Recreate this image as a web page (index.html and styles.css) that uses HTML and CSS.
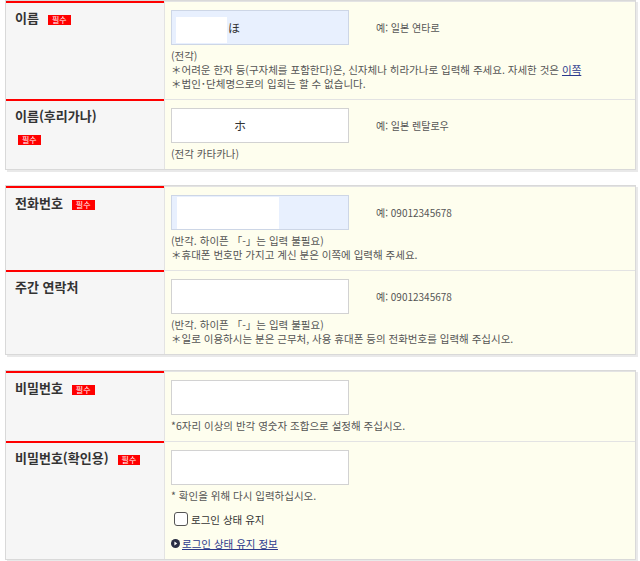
FILE: index.html
```html
<!DOCTYPE html>
<html lang="ko">
<head>
  <meta charset="UTF-8">
  <title>회원 정보 입력</title>
  <link rel="stylesheet" href="styles.css">
</head>
<body>

  <table class="form-table">
    <tr>
      <th><span class="label">이름</span><span class="req">필수</span></th>
      <td>
        <div class="field">
          <input type="text" class="text autofill mask-name" value="ほ">
          <span class="example">예: 일본 연타로</span>
        </div>
        <p class="note">(전각)</p>
        <p class="note">＊어려운 한자 등(구자체를 포함한다)은, 신자체나 히라가나로 입력해 주세요. 자세한 것은 <a href="#">이쪽</a></p>
        <p class="note">＊법인･단체명으로의 입회는 할 수 없습니다.</p>
      </td>
    </tr>
    <tr>
      <th>
        <span class="label">이름(후리가나)</span>
        <div class="req-line"><span class="req">필수</span></div>
      </th>
      <td>
        <div class="field">
          <input type="text" class="text kana" value="ホ">
          <span class="example">예: 일본 렌탈로우</span>
        </div>
        <p class="note">(전각 카타카나)</p>
      </td>
    </tr>
  </table>

  <table class="form-table">
    <tr>
      <th><span class="label">전화번호</span><span class="req">필수</span></th>
      <td>
        <div class="field">
          <input type="text" class="text autofill mask-tel" value="">
          <span class="example">예: 09012345678</span>
        </div>
        <p class="note">(반각. 하이픈 「-」는 입력 불필요)</p>
        <p class="note">＊휴대폰 번호만 가지고 계신 분은 이쪽에 입력해 주세요.</p>
      </td>
    </tr>
    <tr>
      <th><span class="label">주간 연락처</span></th>
      <td>
        <div class="field">
          <input type="text" class="text" value="">
          <span class="example">예: 09012345678</span>
        </div>
        <p class="note">(반각. 하이픈 「-」는 입력 불필요)</p>
        <p class="note">＊일로 이용하시는 분은 근무처, 사용 휴대폰 등의 전화번호를 입력해 주십시오.</p>
      </td>
    </tr>
  </table>

  <table class="form-table">
    <tr>
      <th><span class="label">비밀번호</span><span class="req">필수</span></th>
      <td>
        <div class="field">
          <input type="password" class="text" value="">
        </div>
        <p class="note">*6자리 이상의 반각 영숫자 조합으로 설정해 주십시오.</p>
      </td>
    </tr>
    <tr>
      <th><span class="label">비밀번호(확인용)</span><span class="req">필수</span></th>
      <td>
        <div class="field">
          <input type="password" class="text" value="">
        </div>
        <p class="note">* 확인을 위해 다시 입력하십시오.</p>
        <label class="keep">
          <input type="checkbox" class="check">
          <span>로그인 상태 유지</span>
        </label>
        <a href="#" class="info-link">
          <svg width="9" height="9" viewBox="0 0 9 9"><circle cx="4.5" cy="4.5" r="4.5" fill="#2b2f45"/><path d="M3.4 2.4 L6.2 4.5 L3.4 6.6 Z" fill="#fff"/></svg>
          <span>로그인 상태 유지 정보</span>
        </a>
      </td>
    </tr>
  </table>

</body>
</html>
```

FILE: styles.css
```css
* {
  box-sizing: border-box;
}

body {
  margin: 0;
  padding: 0 2px 0 5px;
  font-family: "Noto Sans CJK KR", "Noto Sans", sans-serif;
  color: #333;
  background-color: #fff;
}

.form-table {
  width: 631px;
  table-layout: fixed;
  border-collapse: separate;
  border-spacing: 0;
  border: 1px solid #d9d9d9;
  box-shadow: 2px 2px 0 #e9e9e9;
  margin-bottom: 15px;
}

.form-table th {
  width: 158px;
  padding: 6px 9px;
  text-align: left;
  vertical-align: top;
  background-color: #f6f6f6;
  border-top: 2px solid #ff0000;
  font-size: 13px;
  line-height: 18px;
  font-weight: bold;
  color: #333;
}

.form-table td {
  padding: 8px 7px 8px 6px;
  vertical-align: top;
  background-color: #fefeee;
  border-top: 1px solid #e3e3e3;
  border-left: 1px solid #e3e3e3;
}

.req {
  display: inline-block;
  margin-left: 9px;
  padding: 0 4px;
  background-color: #ff0000;
  color: #fff;
  font-size: 8px;
  line-height: 10px;
  font-weight: normal;
}

.req-line {
  margin-top: 4px;
}

.req-line .req {
  margin-left: 3px;
}

.field {
  display: flex;
  align-items: center;
  height: 35px;
}

.text {
  width: 178px;
  height: 35px;
  padding: 0 0 0 8px;
  border: 1px solid #d2d2d2;
  background-color: #fff;
  font-family: inherit;
  font-size: 12px;
  color: #333;
}

.autofill {
  border-color: #cdd6e6;
  background-color: #e8f0fe;
  background-image: linear-gradient(#fff, #fff);
  background-repeat: no-repeat;
}

.mask-name {
  padding-left: 56px;
  background-position: 4px 6px;
  background-size: 51px 26px;
}

.mask-tel {
  background-position: 5px 1px;
  background-size: 102px 32px;
}

.kana {
  padding-left: 62px;
}

.example {
  margin-left: 27px;
  font-size: 10px;
  color: #555;
}

.note {
  margin: 0;
  font-size: 10.5px;
  line-height: 14px;
  color: #555;
}

.field + .note {
  margin-top: 4px;
}

.note a {
  color: #2d3a8c;
}

.keep {
  display: flex;
  align-items: center;
  gap: 3px;
  height: 16px;
  margin-top: 8px;
  margin-left: 3px;
  font-size: 10.5px;
  color: #333;
}

.check {
  appearance: none;
  width: 14px;
  height: 14px;
  margin: 0;
  border: 1px solid #555;
  border-radius: 3px;
  background-color: #fff;
}

.info-link {
  display: flex;
  align-items: center;
  gap: 2px;
  height: 16px;
  margin-top: 8px;
  font-size: 10.5px;
  color: #2d3a8c;
}

.info-link span {
  text-decoration: underline;
}
```
